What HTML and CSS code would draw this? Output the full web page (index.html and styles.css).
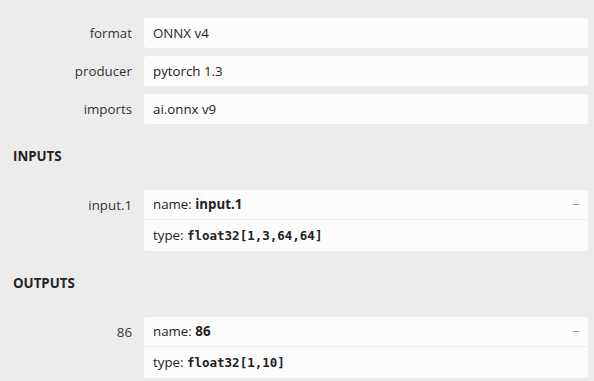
FILE: index.html
```html
<!DOCTYPE html>
<html lang="en">
<head>
    <meta charset="UTF-8">
    <meta name="viewport" content="width=device-width, initial-scale=1.0">
    <title>Model Properties</title>
    <link rel="stylesheet" href="styles.css">
</head>
<body>
    <div class="sidebar">
        <div class="item">
            <div class="item-name">format</div>
            <div class="item-value">ONNX v4</div>
        </div>
        <div class="item">
            <div class="item-name">producer</div>
            <div class="item-value">pytorch 1.3</div>
        </div>
        <div class="item">
            <div class="item-name">imports</div>
            <div class="item-value">ai.onnx v9</div>
        </div>

        <div class="section-header">INPUTS</div>
        <div class="item">
            <div class="item-name">input.1</div>
            <div class="item-value item-argument">
                <div class="argument-line argument-name">
                    <span>name: <b>input.1</b></span>
                    <span class="toggle"></span>
                </div>
                <div class="argument-line">type: <code>float32[1,3,64,64]</code></div>
            </div>
        </div>

        <div class="section-header">OUTPUTS</div>
        <div class="item">
            <div class="item-name">86</div>
            <div class="item-value item-argument">
                <div class="argument-line argument-name">
                    <span>name: <b>86</b></span>
                    <span class="toggle"></span>
                </div>
                <div class="argument-line">type: <code>float32[1,10]</code></div>
            </div>
        </div>
    </div>
</body>
</html>
```

FILE: styles.css
```css
body { margin: 0; background-color: #ececec; color: #222; font-family: "Open Sans", "Noto Sans", sans-serif; font-size: 13.3px; }
.sidebar { padding: 18px 6px 0 12px; }
.item { display: flex; align-items: flex-start; margin-bottom: 8px; }
.item-name { width: 120px; flex: none; text-align: right; color: #333; padding-top: 6px; line-height: 18px; }
.item-value { flex: 1; margin-left: 12px; background-color: #fcfcfc; border-radius: 3px; padding: 6px 9px; line-height: 18px; min-height: 18px; }
.item-argument { padding: 0; }
.argument-line { padding: 6px 9px; line-height: 18px; }
.argument-name { display: flex; justify-content: space-between; align-items: center; padding: 5px 9px 6px 9px; border-bottom: 1px solid #eeeeee; }
.argument-line b { font-weight: bold; }
.argument-line code { font-family: "DejaVu Sans Mono", "Liberation Mono", monospace; font-size: 12.5px; font-weight: bold; color: #222; }
.toggle { width: 6px; height: 1px; background-color: #a0a0a0; }
.section-header { font-weight: bold; font-size: 13.3px; color: #222; line-height: 20px; margin: 22px 0 24px 1px; }
```
